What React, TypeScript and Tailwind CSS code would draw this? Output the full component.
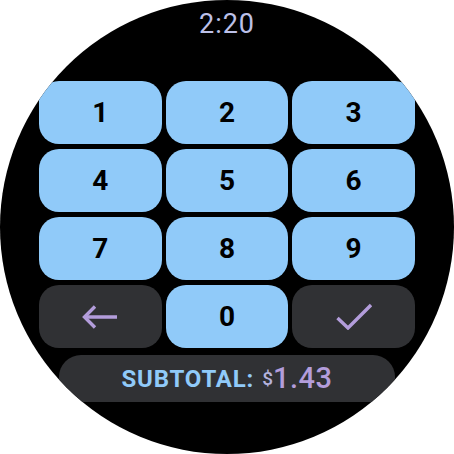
import React from 'react';

const keys = ['1', '2', '3', '4', '5', '6', '7', '8', '9'];

const DigitKey: React.FC<{ label: string }> = ({ label }) => (
  <button className="h-[63px] rounded-[20px] bg-[#90caf9] flex items-center justify-center text-[28px] font-bold text-black leading-none">
    {label}
  </button>
);

export default function App() {
  return (
    <div className="w-[454px] h-[454px] bg-white" style={{ fontFamily: 'Roboto, "Noto Sans", sans-serif' }}>
      <div className="w-[454px] h-[454px] rounded-full bg-black overflow-hidden flex flex-col items-center">
        {/* Clock */}
        <div className="h-[81px] w-full pt-[11px] flex justify-center">
          <span className="text-[27px] leading-[27px] tracking-[1px] text-[#bcc0e8]">2:20</span>
        </div>

        {/* Keypad */}
        <div className="w-[376px] grid grid-cols-3 gap-x-[4px] gap-y-[5px]">
          {keys.map((k) => (
            <DigitKey key={k} label={k} />
          ))}
          <button className="h-[63px] rounded-[20px] bg-[#303134] flex items-center justify-center">
            <svg width="36" height="24" viewBox="0 0 36 24" fill="none" stroke="#b39ddb" strokeWidth="3.4">
              <line x1="3" y1="12" x2="35" y2="12" />
              <polyline points="13,1.5 2.5,12 13,22.5" />
            </svg>
          </button>
          <DigitKey label="0" />
          <button className="h-[63px] rounded-[20px] bg-[#303134] flex items-center justify-center">
            <svg width="36" height="27" viewBox="0 0 36 27" fill="none" stroke="#b39ddb" strokeWidth="3.4">
              <polyline points="1.5,15 12,25 35,2" />
            </svg>
          </button>
        </div>

        {/* Subtotal */}
        <div className="mt-[7px] w-[336px] h-[47px] rounded-[22px] bg-[#303134] flex items-center justify-center">
          <span className="text-[24px] font-bold leading-none tracking-[0.8px] text-[#90caf9]">SUBTOTAL:</span>
          <span className="ml-[8px] text-[19px] font-medium leading-none text-[#b5b3dd]">$</span>
          <span className="text-[29px] font-medium leading-none tracking-[0.5px] text-[#b39ddb]">1.43</span>
        </div>
      </div>
    </div>
  );
}
